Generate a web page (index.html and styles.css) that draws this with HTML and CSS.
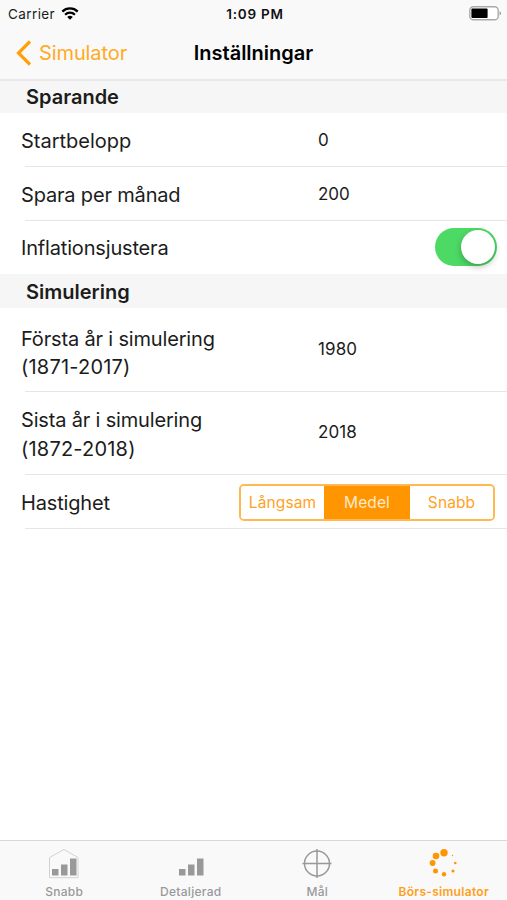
FILE: index.html
```
<!DOCTYPE html>
<html lang="sv">
<head>
  <meta charset="UTF-8" />
  <meta name="viewport" content="width=device-width, initial-scale=1.0" />
  <title>Inställningar</title>
  <link rel="stylesheet" href="styles.css">
</head>
<body>
  <header>
    <div class="statusbar">
      <div class="carrier">
        <span>Carrier</span>
        <svg width="18" height="13" viewBox="0 0 18 13" fill="none" stroke="#000" stroke-width="2.3">
          <path d="M1.3 4.6a11 11 0 0 1 15.4 0" />
          <path d="M4.1 7.7a7 7 0 0 1 9.8 0" />
          <path d="M6.2 10a4 4 0 0 1 5.6 0L9 12.8z" fill="#000" stroke="none" />
        </svg>
      </div>
      <div class="clock">1:09 PM</div>
      <svg class="battery" width="33" height="15" viewBox="0 0 33 15">
        <rect x="0.8" y="0.8" width="28.4" height="13" rx="3.6" fill="#fff" stroke="#a9a9a9" stroke-width="1.4" />
        <rect x="2.4" y="2.5" width="16.2" height="9.6" rx="1" fill="#000" />
        <path d="M30.6 5v4.6q1.4-.8 1.4-2.3t-1.4-2.3z" fill="#999" />
      </svg>
    </div>
    <div class="navbar">
      <a class="back">
        <svg width="16" height="26" viewBox="0 0 16 26" fill="none" stroke="#ff9f0a" stroke-width="3.2">
          <path d="M15 1.500L3.500 13l11.500 11.500" />
        </svg>
        <span>Simulator</span>
      </a>
      <h1>Inställningar</h1>
    </div>
  </header>

  <main>
    <h2>Sparande</h2>
    <div class="row">
      <label class="start">Startbelopp</label>
      <span class="value">0</span>
    </div>
    <div class="row">
      <label>Spara per månad</label>
      <span class="value">200</span>
    </div>
    <div class="row last">
      <label>Inflationsjustera</label>
      <div class="switch"><div class="knob"></div></div>
    </div>

    <h2 class="simulering">Simulering</h2>
    <div class="row high forsta">
      <label>Första år i simulering<br><span class="years">(1871-2017)</span></label>
      <span class="value">1980</span>
    </div>
    <div class="row high sista">
      <label>Sista år i simulering<br><span class="years">(1872-2018)</span></label>
      <span class="value">2018</span>
    </div>
    <div class="row">
      <label>Hastighet</label>
      <div class="segments">
        <button>Långsam</button>
        <button class="active">Medel</button>
        <button>Snabb</button>
      </div>
    </div>
  </main>

  <nav class="tabbar">
    <a class="tab">
      <svg width="32" height="32" viewBox="0 0 32 32">
        <path d="M1.500 9.500L16 1.500l14 8v20.200h-28.500z" fill="none" stroke="#d2d2d2" />
        <path d="M4 21h6.500v6.500H4zM13 16.500h6.500v11H13zM22 10.500h6.500v17H22z" fill="#999" />
      </svg>
      <span>Snabb</span>
    </a>
    <a class="tab">
      <svg width="32" height="32" viewBox="0 0 32 32">
        <path d="M4 21h6.500v6.500H4zM13 16.500h6.500v11H13zM22 10.500h6.500v17H22z" fill="#999" />
      </svg>
      <span>Detaljerad</span>
    </a>
    <a class="tab">
      <svg width="32" height="32" viewBox="0 0 32 32" fill="none" stroke="#999" stroke-width="1.500">
        <circle cx="16" cy="15.500" r="12.500" />
        <path d="M16 1v29M1.500 15.500h29" />
      </svg>
      <span>Mål</span>
    </a>
    <a class="tab active">
      <svg width="32" height="32" viewBox="0 0 32 32" fill="#ff9500">
        <circle cx="16" cy="4.700" r="3.700" />
        <circle cx="8" cy="8" r="3.300" />
        <circle cx="4.600" cy="15" r="2.900" />
        <circle cx="7.500" cy="23" r="2.500" />
        <circle cx="16" cy="26.300" r="2.200" />
        <circle cx="25" cy="23" r="1.600" />
        <circle cx="27.300" cy="15" r="1.300" />
        <circle cx="24.500" cy="7.500" r="0.700" />
      </svg>
      <span>Börs-simulator</span>
    </a>
  </nav>
</body>
</html>
```
FILE: styles.css
```
body {
  font-family: Inter, "Liberation Sans", sans-serif;
  background: #fff;
  color: #1c1c1c;
  margin: 0;
  height: 900px;
  display: flex;
  flex-direction: column;
  overflow: hidden;
}

header {
  box-sizing: border-box;
  height: 81px;
  background: #f9f9f9;
  border-bottom: 2px solid #e8e8e8;
}

.statusbar {
  display: grid;
  grid-template-columns: 1fr auto 1fr;
  align-items: center;
  height: 27px;
  padding: 0 5px 0 8px;
  font-size: 13.5px;
}

.carrier {
  display: flex;
  align-items: center;
  gap: 6px;
  letter-spacing: 0.4px;
}

.clock {
  font-weight: 600;
  color: #111;
  letter-spacing: 0.8px;
}

.battery {
  justify-self: end;
}

.navbar {
  display: grid;
  grid-template-columns: 1fr auto 1fr;
  align-items: center;
  height: 51px;
  padding: 0 15px;
}

.back {
  display: flex;
  align-items: center;
  gap: 8px;
  font-size: 20px;
  letter-spacing: -0.1px;
  color: #ffab24;
}

h1 {
  margin: 0;
  font-size: 20px;
  font-weight: 600;
  color: #000;
}

main {
  flex: 1;
}

h2 {
  box-sizing: border-box;
  height: 32px;
  margin: 0;
  padding-left: 26px;
  background: #f6f6f6;
  font-size: 20px;
  font-weight: 600;
  line-height: 33px;
}

.simulering {
  height: 34px;
  line-height: 37px;
}

.row {
  display: flex;
  align-items: center;
  box-sizing: border-box;
  height: 54px;
  padding-left: 21px;
  background: linear-gradient(#e6e6e6, #e6e6e6) 25px 100% / 100% 1px no-repeat;
}

.row.last {
  background: none;
  height: 53px;
}

.row.high {
  height: 84px;
}

.row.sista {
  height: 83px;
}

label {
  width: 297px;
  padding-top: 1px;
  font-size: 20px;
  line-height: 28px;
  letter-spacing: -0.17px;
}

.start {
  letter-spacing: 0;
}

.years {
  letter-spacing: 0.2px;
}

.forsta label {
  padding-top: 5px;
}

.sista label {
  padding-top: 2px;
  line-height: 29px;
}

.value {
  font-size: 17px;
  letter-spacing: -0.1px;
}

.high .value {
  padding-bottom: 3px;
  letter-spacing: 0.1px;
}

.switch {
  box-sizing: border-box;
  width: 62px;
  height: 38px;
  margin: 0 0 1px 117px;
  padding: 2px;
  border-radius: 19px;
  background: #4cd964;
}

.knob {
  width: 34px;
  height: 34px;
  margin-left: auto;
  border-radius: 50%;
  background: #fff;
  box-shadow: 0 3px 6px rgba(0,0,0,0.25);
}

.segments {
  display: grid;
  grid-template-columns: 83px 86px 1fr;
  box-sizing: border-box;
  width: 256px;
  height: 37px;
  margin-left: -79px;
  border: 2px solid #ffb950;
  border-radius: 5px;
  overflow: hidden;
}

.segments button {
  padding: 0;
  border: none;
  background: #fff;
  color: #ffa21f;
  font-family: inherit;
  font-size: 15.5px;
  letter-spacing: 0.1px;
}

.segments .active {
  margin: -2px 0;
  background: #ff9500;
  color: #ffe9cb;
}

.tabbar {
  display: grid;
  grid-template-columns: repeat(4, 1fr);
  box-sizing: border-box;
  height: 60px;
  padding: 7px 0 0 1px;
  background: #f9f9f9;
  border-top: 1px solid #d8d8d8;
}

.tab {
  display: flex;
  flex-direction: column;
  align-items: center;
  font-size: 12px;
  font-weight: 500;
  line-height: 23px;
  letter-spacing: 0.3px;
  color: #999;
}

.tab.active {
  color: #ff9f1c;
  font-weight: 600;
}
```
